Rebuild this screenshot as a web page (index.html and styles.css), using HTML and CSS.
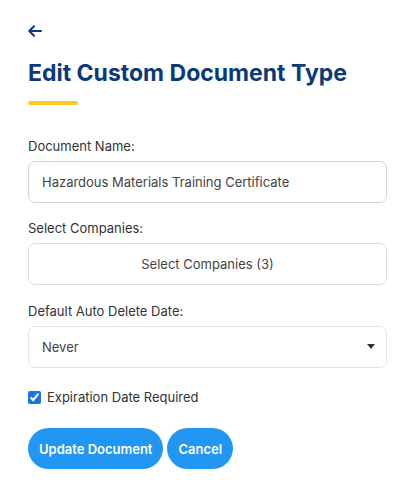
FILE: index.html
```html
<!DOCTYPE html>
<html lang="en">
<head>
    <meta charset="UTF-8">
    <meta name="viewport" content="width=device-width, initial-scale=1.0">
    <title>Edit Custom Document Type</title>
    <link rel="stylesheet" href="styles.css">
</head>
<body>

<div class="container">
    <a class="back" href="#" aria-label="Back">
        <svg width="14" height="12" viewBox="0 0 14 12" fill="none" stroke="#0b3a78" stroke-width="2" stroke-linecap="round" stroke-linejoin="round">
            <path d="M13 6H1.5M6 1.3L1.3 6L6 10.7"/>
        </svg>
    </a>
    <h1>Edit Custom Document Type</h1>
    <div class="underline"></div>

    <form id="docForm">
        <div class="field">
            <label for="name">Document Name:</label>
            <input type="text" id="name" value="Hazardous Materials Training Certificate">
        </div>

        <div class="field">
            <label>Select Companies:</label>
            <button type="button" class="picker">Select Companies (3)</button>
        </div>

        <div class="field">
            <label for="deleteDate">Default Auto Delete Date:</label>
            <div class="select-wrap">
                <select id="deleteDate">
                    <option>Never</option>
                    <option>30 Days</option>
                    <option>90 Days</option>
                    <option>1 Year</option>
                </select>
                <span class="caret"></span>
            </div>
        </div>

        <div class="check">
            <input type="checkbox" id="expiration" checked>
            <label for="expiration">Expiration Date Required</label>
        </div>

        <div class="actions">
            <button type="button" class="btn">Update Document</button>
            <button type="button" class="btn">Cancel</button>
        </div>
    </form>
</div>

</body>
</html>
```

FILE: styles.css
```css
body {
    font-family: Inter, "Noto Sans", sans-serif;
    background-color: #fff;
    margin: 0;
    color: #333;
}
.container {
    padding: 20px 24px 20px 28px;
}
.back {
    display: block;
    width: 14px;
    height: 12px;
    margin-top: 5px;
}
.back svg {
    display: block;
}
h1 {
    font-size: 23px;
    font-weight: 700;
    color: #0b3a78;
    margin: 22px 0 0;
    line-height: 28px;
}
.underline {
    width: 50px;
    height: 4px;
    border-radius: 2px;
    background-color: #fcc92b;
    margin-top: 14px;
}
form {
    margin-top: 31px;
}
.field {
    margin-bottom: 15px;
}
.field:nth-child(2) {
    margin-bottom: 16px;
}
.field label {
    display: block;
    font-size: 13px;
    line-height: 20px;
    color: #333;
    margin-bottom: 5px;
}
.field input, .picker, .select-wrap select {
    box-sizing: border-box;
    width: 359px;
    height: 42px;
    padding: 0 13px;
    border: 1px solid #d4d4d8;
    border-radius: 7px;
    background-color: #fff;
    font-family: inherit;
    font-size: 13px;
    color: #444;
    margin: 0;
}
.picker {
    text-align: center;
    border-color: #dcdce2;
    cursor: pointer;
}
.select-wrap {
    position: relative;
    width: 359px;
}
.select-wrap select {
    appearance: none;
    -webkit-appearance: none;
    border-color: #e4e4ea;
    outline: none;
}
.caret {
    position: absolute;
    right: 12px;
    top: 18px;
    width: 0;
    height: 0;
    border-left: 4px solid transparent;
    border-right: 4px solid transparent;
    border-top: 5px solid #333;
    pointer-events: none;
}
.check {
    display: flex;
    align-items: center;
    margin-top: 23px;
}
.check input {
    width: 13px;
    height: 13px;
    margin: 0 6px 0 0;
    accent-color: #1a73e8;
}
.check label {
    font-size: 13px;
    line-height: 13px;
    color: #333;
}
.actions {
    display: flex;
    gap: 4px;
    margin-top: 24px;
}
.btn {
    height: 41px;
    padding: 0 11px;
    background-color: #2196f3;
    border: none;
    border-radius: 21px;
    color: white;
    font-family: inherit;
    font-size: 13px;
    font-weight: 600;
    cursor: pointer;
}
.btn:hover {
    background-color: #1c86da;
}
```
